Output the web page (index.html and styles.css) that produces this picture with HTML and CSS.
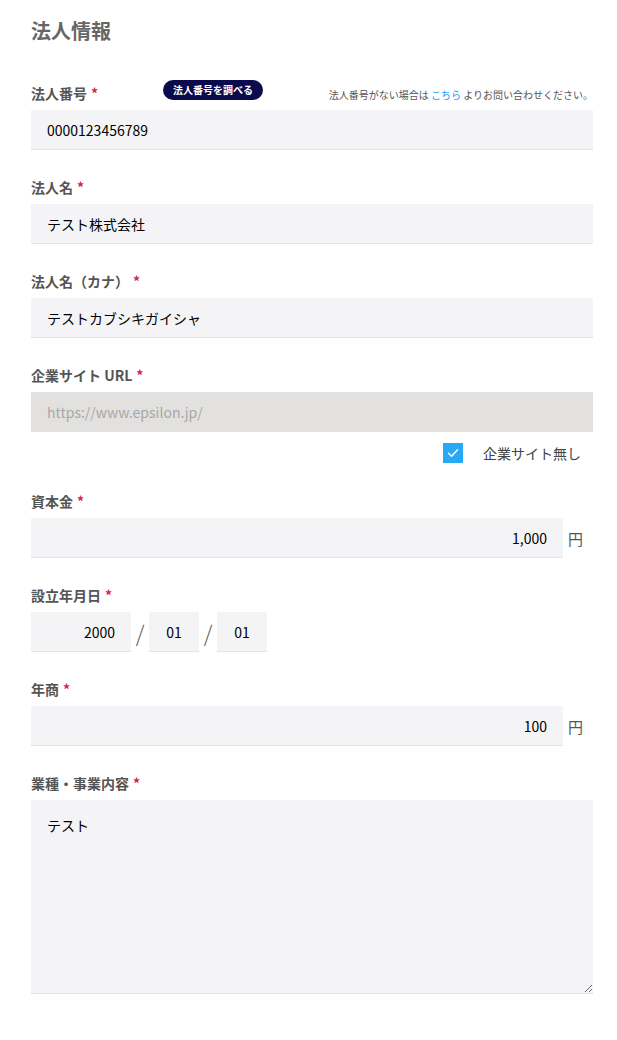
FILE: index.html
```html
<!DOCTYPE html>
<html lang="ja">
<head>
<meta charset="utf-8">
<title>法人情報</title>
<link rel="stylesheet" href="styles.css">
</head>
<body>
<div class="page">
  <h1 class="title">法人情報</h1>

  <div class="field">
    <div class="label-row">
      <label class="label label-fixed">法人番号<span class="req">*</span></label>
      <span class="badge">法人番号を調べる</span>
      <span class="note">法人番号がない場合は <a class="link">こちら</a> よりお問い合わせください。</span>
    </div>
    <input class="input" type="text" value="0000123456789">
  </div>

  <div class="field">
    <label class="label">法人名<span class="req">*</span></label>
    <input class="input" type="text" value="テスト株式会社">
  </div>

  <div class="field">
    <label class="label">法人名（カナ）<span class="req">*</span></label>
    <input class="input" type="text" value="テストカブシキガイシャ">
  </div>

  <div class="field field-url">
    <label class="label">企業サイト URL<span class="req">*</span></label>
    <input class="input input-disabled" type="text" placeholder="https://www.epsilon.jp/">
    <div class="check-row">
      <span class="checkbox"><svg viewBox="0 0 20 20" width="20" height="20"><path d="M5.5 10.2 L8.6 13.2 L14.6 6.8" fill="none" stroke="#fff" stroke-width="1.4" stroke-linecap="round" stroke-linejoin="round"/></svg></span>
      <span class="check-label">企業サイト無し</span>
    </div>
  </div>

  <div class="field">
    <label class="label">資本金<span class="req">*</span></label>
    <div class="unit-row">
      <input class="input input-right" type="text" value="1,000">
      <span class="unit">円</span>
    </div>
  </div>

  <div class="field">
    <label class="label">設立年月日<span class="req">*</span></label>
    <div class="date-row">
      <input class="input input-year" type="text" value="2000">
      <span class="slash">/</span>
      <input class="input input-md" type="text" value="01">
      <span class="slash">/</span>
      <input class="input input-md" type="text" value="01">
    </div>
  </div>

  <div class="field">
    <label class="label">年商<span class="req">*</span></label>
    <div class="unit-row">
      <input class="input input-right" type="text" value="100">
      <span class="unit">円</span>
    </div>
  </div>

  <div class="field">
    <label class="label">業種・事業内容<span class="req">*</span></label>
    <textarea class="input textarea">テスト</textarea>
  </div>
</div>
</body>
</html>
```

FILE: styles.css
```css
* { box-sizing: border-box; }

html, body {
  margin: 0;
  padding: 0;
  background: #fff;
}

body {
  font-family: "Noto Sans CJK JP", "Noto Sans", sans-serif;
  color: #000;
}

.page {
  width: 562px;
  margin-left: 31px;
  padding-top: 16px;
  padding-bottom: 40px;
}

.title {
  margin: 0 0 34px;
  font-size: 20px;
  line-height: 30px;
  font-weight: 700;
  color: #666;
}

.field {
  display: flex;
  flex-direction: column;
  margin-bottom: 27px;
}

.label {
  display: block;
  font-size: 14px;
  line-height: 20px;
  font-weight: 700;
  color: #555;
  margin-bottom: 7px;
}

.req {
  color: #d81b5a;
  margin-left: 4px;
}

.label-row {
  display: flex;
  align-items: flex-end;
  margin-bottom: 7px;
}

.label-row .label {
  margin-bottom: 0;
}

.label-fixed {
  width: 132px;
}

.badge {
  display: inline-flex;
  align-items: center;
  justify-content: center;
  width: 100px;
  height: 20px;
  margin-bottom: 3px;
  border-radius: 10px;
  background: #0b0a4c;
  color: #fff;
  font-size: 10px;
  font-weight: 700;
  line-height: 1;
}

.note {
  margin-left: auto;
  margin-right: 0;
  margin-bottom: 1px;
  font-size: 10px;
  line-height: 14px;
  color: #555;
}

.link {
  color: #1e9cf0;
  text-decoration: none;
}

.input {
  display: block;
  width: 100%;
  height: 40px;
  margin: 0;
  padding: 0 16px;
  border: 0;
  border-bottom: 1px solid #e3e3e5;
  border-radius: 0;
  background: #f4f4f6;
  font-family: "Noto Sans CJK JP", "Noto Sans", sans-serif;
  font-size: 14px;
  color: #000;
  outline: none;
}

.input-disabled {
  background: #e2e1df;
}

.input-disabled::placeholder {
  color: #a8a8a8;
}

.field-url {
  margin-bottom: 28px;
}

.check-row {
  display: flex;
  align-items: center;
  justify-content: flex-end;
  gap: 20px;
  margin-top: 11px;
  padding-right: 12px;
  height: 20px;
}

.checkbox {
  display: block;
  width: 20px;
  height: 20px;
  background: #29a9f5;
}

.checkbox svg {
  display: block;
}

.check-label {
  font-size: 14px;
  line-height: 20px;
  color: #444;
}

.unit-row {
  display: flex;
  align-items: center;
}

.unit-row .input {
  width: 532px;
  flex: none;
}

.input-right {
  text-align: right;
}

.unit {
  margin-left: 5px;
  font-size: 15px;
  color: #555;
}

.date-row {
  display: flex;
  align-items: center;
}

.input-year {
  width: 100px;
  text-align: right;
}

.input-md {
  width: 50px;
  padding: 0;
  text-align: center;
}

.slash {
  width: 18px;
  text-align: center;
  font-size: 22px;
  line-height: 24px;
  color: #555;
  font-weight: 300;
}

.textarea {
  height: 194px;
  padding: 15px 16px;
  line-height: 20px;
  resize: vertical;
}
```
